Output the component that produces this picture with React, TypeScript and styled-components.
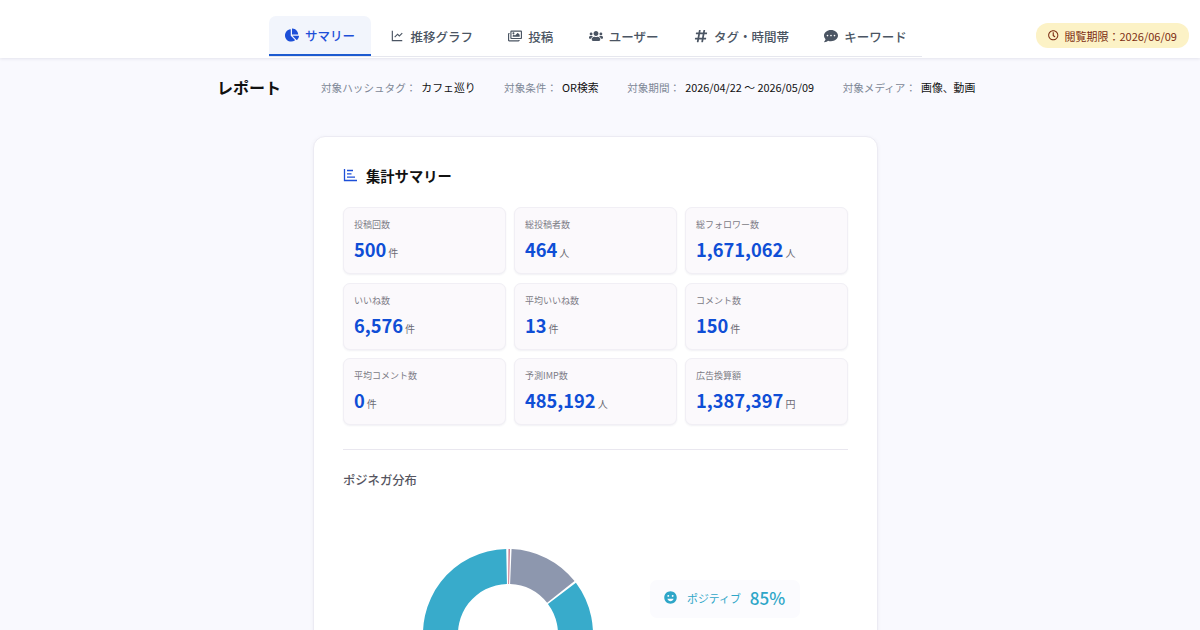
import styled, { createGlobalStyle } from "styled-components";
import {
    FaChartPie,
    FaCommentDots,
    FaHashtag,
    FaRegClock,
    FaRegImages,
    FaUsers,
} from "react-icons/fa";
import { MdEmojiEmotions } from "react-icons/md";
import { RiLineChartLine } from "react-icons/ri";

const GlobalStyle = createGlobalStyle`
    * { box-sizing: border-box; }
    html, body {
        margin: 0;
        height: 630px;
        overflow: hidden;
        background: #f9f9fe;
        font-family: "Noto Sans CJK JP", "Noto Sans", sans-serif;
    }
`;

const Header = styled.header`
    height: 58px;
    background: #fff;
    box-shadow: 0 1px 3px rgba(40, 40, 80, 0.1);
    display: flex;
    padding-left: 269px;
    padding-right: 11px;
    align-items: flex-start;
    justify-content: space-between;
`;

const Tabs = styled.nav`
    margin-top: 16px;
    width: 653px;
    height: 41px;
    display: flex;
    gap: 3.4px;
    border-bottom: 1px solid #e6e7ee;
`;

const Tab = styled.div<{ $active?: boolean }>`
    flex: none;
    height: 40px;
    padding: 0 16px;
    display: flex;
    align-items: center;
    gap: 6px;
    font-size: 12.5px;
    font-weight: 500;
    white-space: nowrap;
    border-radius: 7px 7px 0 0;
    color: ${p => (p.$active ? "#1d4fd8" : "#4b5563")};
    background: ${p => (p.$active ? "#f2f5fc" : "transparent")};
    border-bottom: ${p => (p.$active ? "2px solid #1d5bd0" : "none")};
    svg {
        font-size: 14px;
    }
`;

const Badge = styled.div`
    margin-top: 23px;
    width: 153px;
    height: 25px;
    border-radius: 12px;
    background: #fcf2c6;
    color: #7c2d12;
    font-size: 11px;
    display: flex;
    align-items: center;
    justify-content: center;
    gap: 6px;
    svg {
        font-size: 10.5px;
    }
`;

const ReportBar = styled.div`
    height: 58px;
    padding-left: 217px;
    display: flex;
    align-items: center;
`;

const ReportTitle = styled.h1`
    margin: 0 40px 0 0;
    font-size: 16px;
    font-weight: 700;
    color: #111;
`;

const Meta = styled.div`
    display: flex;
    gap: 28.5px;
    font-size: 10.6px;
`;

const MetaItem = styled.div`
    display: flex;
    align-items: baseline;
    gap: 5px;
`;

const MetaLabel = styled.span`
    color: #7d8796;
`;

const MetaValue = styled.span`
    font-size: 10.85px;
    color: #111;
`;

const Card = styled.main`
    width: 565px;
    margin: 20px 0 0 313px;
    padding: 26px 29px 40px;
    background: #fff;
    border: 1px solid #ecebf3;
    border-radius: 12px;
    box-shadow: 0 1px 4px rgba(60, 60, 100, 0.06);
`;

const CardTitle = styled.h2`
    margin: 0 0 20px;
    height: 24px;
    display: flex;
    align-items: center;
    gap: 8px;
    font-size: 14.3px;
    font-weight: 700;
    color: #111;
`;

const TitleIcon = styled.svg`
    width: 14px;
    height: 14px;
    margin-right: 1px;
    color: #1d4fd8;
`;

const StatGrid = styled.div`
    display: grid;
    grid-template-columns: repeat(3, 1fr);
    gap: 8.7px 8px;
`;

const Stat = styled.div`
    height: 67px;
    padding: 10px 10px 0;
    background: #fbf9fc;
    border: 1px solid #f1eff5;
    border-radius: 7px;
    box-shadow: 0 1px 2px rgba(60, 60, 100, 0.07);
`;

const StatLabel = styled.div`
    font-size: 9px;
    line-height: 14px;
    color: #7b7b85;
`;

const StatValue = styled.div`
    margin-top: 2px;
    display: flex;
    align-items: baseline;
    gap: 2px;
    font-size: 18.3px;
    line-height: 30px;
    font-weight: 700;
    color: #0f4ed6;
`;

const StatUnit = styled.span`
    font-size: 10px;
    font-weight: 400;
    color: #6b6b75;
`;

const Divider = styled.hr`
    margin: 24px 0 20px;
    border: none;
    border-top: 1px solid #e9e7ef;
`;

const SectionTitle = styled.h3`
    margin: 0;
    font-size: 12.3px;
    line-height: 20px;
    font-weight: 500;
    color: #55555f;
`;

const Distribution = styled.div`
    margin-top: 58px;
    display: flex;
    align-items: flex-start;
`;

const Donut = styled.svg`
    margin-left: 79px;
    width: 172px;
    height: 172px;
    flex: none;
`;

const Legend = styled.div`
    margin: 32px 0 0 56px;
    display: flex;
    flex-direction: column;
    gap: 10px;
`;

const LegendRow = styled.div`
    width: 150px;
    height: 38px;
    padding: 0 0 3px 13px;
    display: flex;
    align-items: center;
    gap: 9px;
    border-radius: 7px;
    background: #fbfbfe;
    color: #2ea6c8;
    svg {
        font-size: 15px;
    }
`;

const LegendLabel = styled.span`
    font-size: 10.9px;
`;

const LegendValue = styled.span`
    font-size: 17px;
    font-weight: 500;
`;

const tabs = [
    { label: "サマリー", icon: <FaChartPie />, active: true },
    { label: "推移グラフ", icon: <RiLineChartLine /> },
    { label: "投稿", icon: <FaRegImages /> },
    { label: "ユーザー", icon: <FaUsers /> },
    { label: "タグ・時間帯", icon: <FaHashtag /> },
    { label: "キーワード", icon: <FaCommentDots /> },
];

const meta = [
    ["対象ハッシュタグ：", "カフェ巡り"],
    ["対象条件：", "OR検索"],
    ["対象期間：", "2026/04/22 ～ 2026/05/09"],
    ["対象メディア：", "画像、動画"],
];

const stats = [
    ["投稿回数", "500", "件"],
    ["総投稿者数", "464", "人"],
    ["総フォロワー数", "1,671,062", "人"],
    ["いいね数", "6,576", "件"],
    ["平均いいね数", "13", "件"],
    ["コメント数", "150", "件"],
    ["平均コメント数", "0", "件"],
    ["予測IMP数", "485,192", "人"],
    ["広告換算額", "1,387,397", "円"],
];

// donut segment between two angles, 0deg is at the top
function arc(from: number, to: number) {
    const R = 85;
    const r = 50;
    const c = 86;
    const pt = (rad: number, deg: number) => {
        const a = ((deg - 90) * Math.PI) / 180;
        return `${(c + rad * Math.cos(a)).toFixed(2)} ${(c + rad * Math.sin(a)).toFixed(2)}`;
    };
    const large = to - from > 180 ? 1 : 0;
    return `M${pt(R, from)}A${R} ${R} 0 ${large} 1 ${pt(R, to)}L${pt(r, to)}A${r} ${r} 0 ${large} 0 ${pt(r, from)}Z`;
}

function App() {
    return (
        <>
            <GlobalStyle />
            <Header>
                <Tabs>
                    {tabs.map(tab => (
                        <Tab key={tab.label} $active={tab.active}>
                            {tab.icon}
                            {tab.label}
                        </Tab>
                    ))}
                </Tabs>
                <Badge>
                    <FaRegClock />
                    閲覧期限：2026/06/09
                </Badge>
            </Header>
            <ReportBar>
                <ReportTitle>レポート</ReportTitle>
                <Meta>
                    {meta.map(([label, value]) => (
                        <MetaItem key={label}>
                            <MetaLabel>{label}</MetaLabel>
                            <MetaValue>{value}</MetaValue>
                        </MetaItem>
                    ))}
                </Meta>
            </ReportBar>
            <Card>
                <CardTitle>
                    <TitleIcon viewBox="0 0 14 14" fill="none" stroke="currentColor" strokeWidth="1.3">
                        <path d="M1.5 1v11.5H14M4 2.5h6M4 5.8h4.5M4 9.2h8" />
                    </TitleIcon>
                    集計サマリー
                </CardTitle>
                <StatGrid>
                    {stats.map(([label, value, unit]) => (
                        <Stat key={label}>
                            <StatLabel>{label}</StatLabel>
                            <StatValue>
                                {value}
                                <StatUnit>{unit}</StatUnit>
                            </StatValue>
                        </Stat>
                    ))}
                </StatGrid>
                <Divider />
                <SectionTitle>ポジネガ分布</SectionTitle>
                <Distribution>
                    <Donut viewBox="0 0 172 172">
                        <path d={arc(53, 358.8)} fill="#38abcb" />
                        <path d={arc(0.4, 1.2)} fill="#c0566e" />
                        <path d={arc(2.4, 51.5)} fill="#8d97ae" />
                    </Donut>
                    <Legend>
                        <LegendRow>
                            <MdEmojiEmotions />
                            <LegendLabel>ポジティブ</LegendLabel>
                            <LegendValue>85%</LegendValue>
                        </LegendRow>
                    </Legend>
                </Distribution>
            </Card>
        </>
    );
}

export default App;
